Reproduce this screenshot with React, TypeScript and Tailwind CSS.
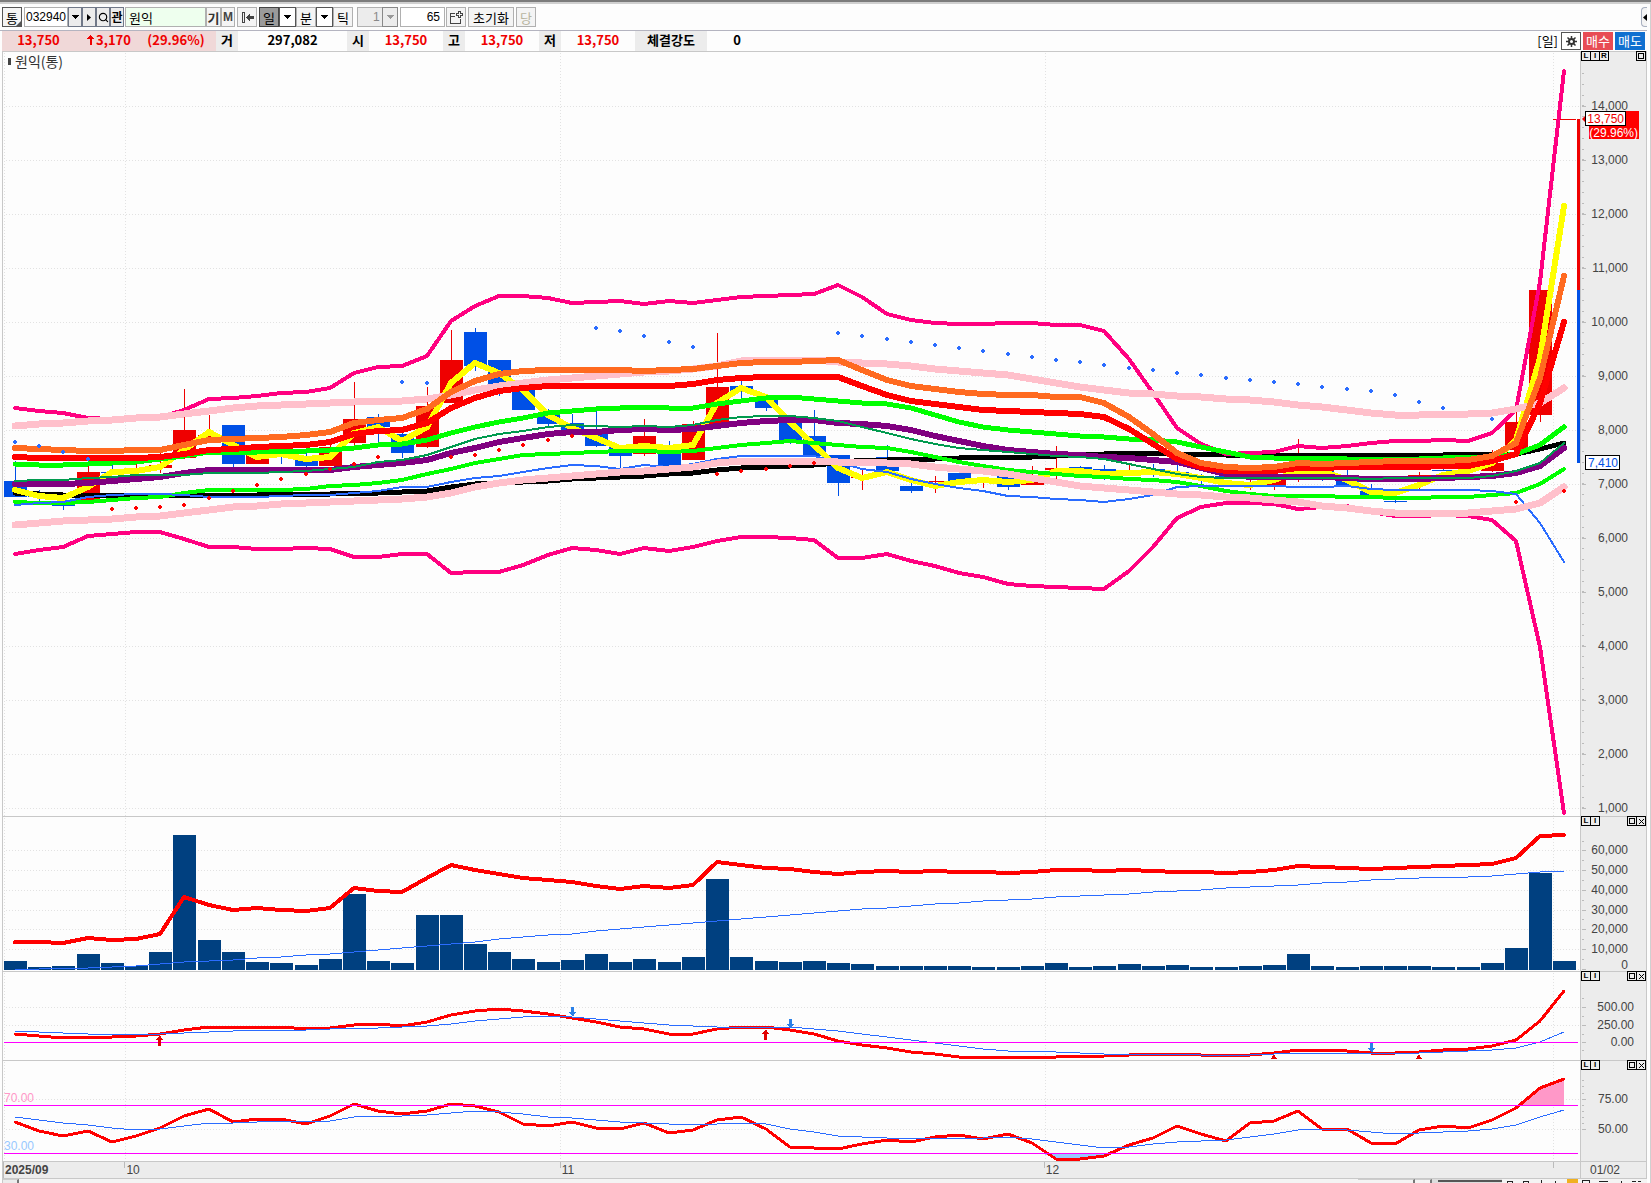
import type { ReactNode } from 'react'
import { Search } from 'lucide-react'

// plot coordinates: one slot per trading day, y grows downwards over all panels
const PLOT_X = 3
const PLOT_W = 1577
const AXIS_X = 1580
const AXIS_W = 67
const px = (i: number) => Math.round(15 + 24.21 * i)

const MONTHS = [4, 125, 560, 1045, 1553]

const UP = '#ef0000'
const DOWN = '#0050e6'

// wick top, body top, body bottom, wick bottom, direction
type Candle = [number, number, number, number, 'u' | 'd']

const candles: Candle[] = [
  [461, 481, 497, 497, 'd'], [490, 494, 497, 501, 'd'], [500, 502, 506, 510, 'd'], [457, 472, 503, 503, 'u'],
  [463, 472, 473, 475, 'd'], [462, 471, 472, 475, 'u'], [452, 465, 468, 473, 'u'], [389, 430, 458, 459, 'u'],
  [415, 435, 437, 437, 'u'], [425, 425, 464, 467, 'd'], [452, 455, 464, 464, 'u'], [448, 454, 456, 464, 'd'],
  [448, 458, 466, 467, 'd'], [443, 447, 466, 466, 'u'], [382, 419, 443, 445, 'u'], [414, 417, 427, 442, 'd'],
  [432, 434, 453, 458, 'd'], [387, 406, 447, 448, 'u'], [330, 360, 403, 403, 'u'], [328, 332, 366, 371, 'd'],
  [360, 360, 385, 396, 'd'], [387, 388, 410, 410, 'd'], [409, 415, 424, 427, 'd'], [414, 423, 433, 433, 'd'],
  [411, 432, 446, 447, 'd'], [445, 445, 456, 468, 'd'], [419, 436, 454, 456, 'u'], [441, 448, 466, 466, 'd'],
  [421, 424, 460, 460, 'u'], [333, 387, 425, 425, 'u'], [381, 386, 392, 399, 'd'], [394, 400, 408, 411, 'd'],
  [415, 423, 440, 444, 'd'], [410, 436, 456, 456, 'd'], [455, 455, 483, 496, 'd'], [468, 477, 478, 490, 'u'],
  [445, 457, 471, 471, 'd'], [483, 486, 491, 493, 'd'], [476, 481, 482, 493, 'u'], [472, 473, 481, 481, 'd'],
  [477, 480, 481, 488, 'u'], [475, 475, 487, 490, 'd'], [466, 482, 485, 485, 'u'], [446, 468, 470, 480, 'u'],
  [466, 467, 469, 469, 'd'], [465, 469, 472, 480, 'd'], [465, 471, 472, 472, 'u'], [464, 469, 470, 477, 'd'],
  [465, 472, 473, 473, 'd'], [474, 476, 477, 484, 'd'], [476, 476, 478, 478, 'd'], [478, 484, 486, 490, 'u'],
  [476, 478, 485, 490, 'u'], [439, 463, 474, 482, 'u'], [466, 468, 473, 481, 'd'], [470, 478, 485, 485, 'd'],
  [484, 491, 496, 496, 'd'], [500, 501, 502, 503, 'd'], [472, 475, 476, 489, 'u'], [468, 470, 471, 471, 'd'],
  [474, 475, 476, 477, 'd'], [450, 463, 471, 472, 'u'], [408, 422, 450, 456, 'u'], [290, 290, 415, 422, 'u'],
]

const bandTop = [408, 411, 413, 418, 419, 419, 417, 410, 399, 398, 396, 393, 392, 388, 373, 367, 366, 356, 321, 306, 296, 296, 298, 303, 302, 301, 304, 301, 303, 300, 297, 296, 295, 294, 285, 297, 314, 320, 323, 324, 324, 323, 323, 325, 325, 331, 359, 393, 428, 444, 454, 453, 452, 446, 448, 446, 443, 441, 441, 440, 441, 433, 410, 282, 71]
const bandBottom = [554, 550, 547, 536, 534, 532, 532, 539, 547, 547, 549, 549, 548, 549, 557, 557, 554, 554, 573, 572, 572, 565, 555, 548, 550, 554, 548, 551, 547, 541, 537, 537, 538, 540, 558, 558, 554, 561, 566, 573, 577, 584, 586, 587, 588, 589, 571, 547, 518, 507, 503, 503, 504, 509, 507, 506, 512, 516, 516, 515, 516, 520, 541, 647, 813]
const envTop = [426, 424, 423, 421, 420, 418, 417, 414, 411, 408, 406, 405, 404, 403, 402, 401, 401, 399, 395, 390, 386, 383, 380, 378, 376, 374, 372, 371, 369, 366, 361, 360, 360, 360, 362, 363, 364, 366, 369, 371, 373, 375, 379, 383, 387, 390, 393, 394, 396, 397, 399, 400, 402, 405, 407, 410, 413, 415, 415, 414, 414, 413, 409, 403, 388]
const envBottom = [525, 523, 521, 520, 519, 517, 516, 513, 510, 507, 506, 504, 503, 502, 501, 500, 499, 497, 493, 487, 483, 480, 478, 476, 474, 472, 471, 469, 467, 463, 461, 461, 461, 461, 462, 462, 463, 464, 467, 469, 471, 474, 478, 482, 486, 488, 490, 492, 494, 495, 497, 498, 500, 502, 506, 508, 511, 513, 513, 513, 513, 511, 509, 503, 487]
const orange = [448, 449, 450, 451, 451, 450, 450, 445, 440, 439, 438, 437, 435, 432, 423, 420, 418, 409, 392, 381, 374, 371, 370, 370, 370, 370, 371, 370, 369, 366, 363, 362, 362, 361, 360, 370, 380, 386, 389, 392, 394, 395, 395, 397, 397, 403, 417, 434, 453, 463, 467, 468, 467, 463, 464, 463, 462, 461, 461, 461, 460, 456, 443, 378, 276]
const red = [457, 458, 458, 458, 458, 458, 457, 454, 450, 449, 447, 446, 445, 442, 434, 431, 430, 423, 408, 398, 391, 388, 386, 386, 386, 386, 386, 386, 384, 380, 378, 377, 377, 377, 377, 386, 395, 401, 404, 407, 410, 411, 412, 413, 414, 417, 429, 444, 459, 467, 471, 471, 471, 468, 468, 467, 467, 467, 467, 466, 466, 461, 454, 403, 322]
const limeTop = [464, 465, 465, 464, 463, 462, 459, 456, 452, 452, 452, 451, 451, 450, 448, 445, 444, 440, 433, 427, 422, 418, 413, 411, 409, 408, 407, 408, 408, 404, 401, 398, 397, 399, 401, 403, 404, 408, 415, 422, 427, 430, 432, 434, 436, 437, 439, 440, 442, 447, 452, 457, 458, 458, 458, 459, 459, 459, 459, 458, 457, 457, 454, 445, 427]
const limeBottom = [502, 503, 503, 502, 500, 498, 497, 493, 490, 490, 490, 490, 489, 486, 485, 483, 480, 474, 469, 463, 459, 455, 454, 453, 452, 451, 451, 452, 451, 448, 445, 443, 441, 443, 445, 447, 448, 452, 457, 462, 466, 470, 472, 474, 476, 477, 479, 480, 482, 486, 491, 494, 496, 496, 496, 497, 497, 498, 498, 497, 497, 495, 493, 484, 469]
const purple = [484, 484, 484, 483, 481, 479, 477, 473, 470, 470, 470, 470, 470, 470, 467, 465, 463, 460, 453, 448, 442, 438, 434, 432, 432, 430, 429, 430, 429, 426, 423, 421, 420, 420, 423, 424, 426, 430, 436, 441, 446, 450, 452, 454, 455, 457, 458, 460, 462, 468, 474, 477, 477, 477, 477, 478, 479, 479, 479, 478, 477, 476, 473, 466, 448]
const teal = [481, 480, 480, 478, 477, 475, 475, 475, 473, 473, 473, 472, 471, 469, 467, 462, 460, 455, 447, 439, 434, 431, 427, 425, 426, 427, 426, 427, 425, 420, 417, 416, 416, 418, 421, 427, 433, 439, 444, 448, 450, 452, 454, 456, 457, 459, 464, 469, 474, 477, 478, 478, 478, 478, 478, 478, 479, 478, 478, 478, 478, 476, 471, 463, 443]
const black = [493, 494, 495, 495, 495, 495, 495, 495, 495, 495, 495, 494, 494, 494, 493, 493, 492, 491, 487, 484, 483, 482, 481, 479, 478, 477, 476, 474, 473, 470, 468, 467, 466, 465, 463, 460, 460, 459, 459, 458, 457, 457, 457, 456, 454, 454, 453, 453, 454, 454, 455, 455, 455, 455, 455, 455, 455, 455, 455, 455, 454, 454, 454, 449, 443]
const blue = [505, 503, 502, 497, 495, 494, 494, 495, 497, 497, 497, 496, 495, 495, 493, 491, 487, 487, 482, 478, 476, 472, 468, 465, 466, 469, 465, 467, 464, 459, 456, 456, 456, 456, 462, 469, 472, 479, 484, 488, 491, 496, 497, 499, 500, 502, 499, 495, 487, 486, 486, 486, 486, 487, 487, 486, 489, 490, 490, 490, 490, 491, 494, 523, 562]
const yellow = [490, 496, 498, 487, 472, 471, 467, 450, 432, 445, 457, 454, 459, 457, 433, 427, 441, 427, 383, 363, 373, 390, 415, 428, 438, 448, 446, 448, 445, 403, 388, 397, 422, 445, 468, 478, 472, 480, 486, 482, 480, 482, 480, 471, 471, 474, 473, 472, 474, 478, 483, 485, 480, 471, 471, 480, 492, 493, 485, 475, 471, 463, 440, 358, 206]

const sarDown: [number, number][] = [[0, 442], [1, 446], [2, 452], [3, 459], [16, 382], [17, 383], [24, 328], [25, 331], [26, 336], [27, 342], [28, 347], [34, 333], [35, 336], [36, 339], [37, 342], [38, 345], [39, 348], [40, 351], [41, 354], [42, 357], [43, 360], [44, 362], [45, 365], [46, 368], [47, 370], [48, 373], [49, 375], [50, 378], [51, 380], [52, 382], [53, 384], [54, 387], [55, 389], [56, 391], [57, 395], [58, 402], [59, 408], [61, 419]]
const sarUp: [number, number][] = [[4, 509], [5, 508], [6, 507], [7, 505], [8, 498], [9, 491], [10, 485], [11, 479], [12, 474], [13, 469], [14, 464], [15, 457], [18, 457], [19, 455], [20, 450], [21, 445], [22, 440], [23, 436], [29, 474], [30, 471], [31, 469], [32, 466], [33, 463], [62, 502], [64, 491]]

const volume = [961, 967, 966, 954, 963, 966, 952, 835, 940, 952, 962, 963, 965, 959, 894, 961, 963, 915, 915, 944, 952, 959, 962, 960, 954, 962, 959, 962, 957, 879, 957, 961, 962, 961, 963, 964, 966, 966, 966, 966, 967, 967, 966, 963, 967, 966, 964, 966, 965, 967, 967, 966, 965, 954, 966, 967, 966, 966, 966, 967, 967, 963, 948, 873, 961]
const volumeFast = [942, 942, 943, 938, 940, 939, 934, 897, 905, 910, 908, 910, 911, 908, 888, 891, 892, 878, 865, 870, 874, 878, 880, 882, 886, 889, 886, 888, 885, 862, 865, 868, 869, 872, 874, 872, 871, 872, 871, 872, 872, 873, 872, 870, 870, 871, 870, 871, 872, 872, 873, 872, 870, 866, 867, 868, 869, 868, 867, 866, 865, 864, 858, 836, 835]
const volumeSlow = [969, 969, 968, 968, 967, 966, 964, 962, 961, 960, 958, 957, 955, 954, 952, 950, 948, 946, 944, 942, 939, 937, 935, 934, 931, 929, 927, 925, 923, 921, 919, 917, 915, 913, 911, 909, 908, 906, 904, 903, 901, 900, 899, 897, 896, 895, 894, 892, 891, 890, 888, 887, 886, 885, 883, 882, 880, 879, 878, 877, 877, 876, 874, 872, 871]

const macd = [1034, 1036, 1038, 1037, 1037, 1036, 1034, 1030, 1027, 1028, 1027, 1027, 1029, 1028, 1025, 1024, 1026, 1022, 1015, 1011, 1009, 1011, 1014, 1018, 1022, 1027, 1029, 1034, 1034, 1029, 1027, 1027, 1030, 1034, 1041, 1045, 1048, 1052, 1054, 1057, 1057, 1058, 1057, 1057, 1056, 1056, 1055, 1054, 1054, 1055, 1055, 1055, 1053, 1050, 1050, 1051, 1053, 1053, 1052, 1050, 1049, 1046, 1040, 1021, 991]
const macdSignal = [1031, 1032, 1033, 1034, 1034, 1034, 1034, 1033, 1032, 1031, 1030, 1030, 1030, 1029, 1028, 1028, 1027, 1026, 1024, 1021, 1019, 1017, 1016, 1017, 1019, 1021, 1023, 1025, 1026, 1027, 1027, 1027, 1027, 1029, 1031, 1034, 1037, 1040, 1043, 1046, 1049, 1051, 1051, 1052, 1053, 1054, 1054, 1054, 1054, 1055, 1055, 1055, 1054, 1053, 1053, 1053, 1053, 1053, 1053, 1052, 1051, 1050, 1048, 1042, 1032]

const rsi = [1122, 1131, 1136, 1131, 1142, 1136, 1128, 1116, 1109, 1122, 1119, 1119, 1124, 1116, 1104, 1111, 1114, 1111, 1104, 1106, 1112, 1124, 1126, 1122, 1128, 1129, 1123, 1133, 1130, 1120, 1117, 1129, 1147, 1148, 1149, 1144, 1140, 1142, 1137, 1135, 1139, 1134, 1143, 1159, 1159, 1156, 1145, 1138, 1126, 1134, 1141, 1123, 1121, 1111, 1129, 1129, 1143, 1144, 1130, 1126, 1128, 1120, 1108, 1088, 1079]
const rsiSignal = [1117, 1120, 1123, 1125, 1128, 1130, 1129, 1126, 1123, 1123, 1122, 1121, 1122, 1121, 1117, 1116, 1116, 1115, 1113, 1111, 1112, 1114, 1117, 1118, 1120, 1122, 1123, 1124, 1125, 1124, 1123, 1124, 1129, 1132, 1136, 1137, 1138, 1139, 1138, 1138, 1138, 1137, 1139, 1142, 1145, 1148, 1147, 1144, 1142, 1141, 1140, 1137, 1134, 1130, 1129, 1130, 1132, 1134, 1133, 1132, 1131, 1129, 1125, 1117, 1110]

const points = (ys: number[]) => ys.map((y, i) => `${px(i)},${y}`).join(' ')

function Line({ ys, color, width = 1 }: { ys: number[]; color: string; width?: number }) {
  return (
    <polyline points={points(ys)} fill="none" stroke={color} strokeWidth={width} strokeLinejoin="round" strokeLinecap="round" />
  )
}

function Level({ y }: { y: number }) {
  return <rect x={4} y={y} width={1574} height={1} fill="#f0f" />
}

function Dot({ i, y, color }: { i: number; y: number; color: string }) {
  const x = px(i)
  return <path d={`M${x - 1} ${y - 2}h2v1h1v2h-1v1h-2v-1h-1v-2h1z`} fill={color} />
}

function Arrow({ i, y, dir }: { i: number; y: number; dir: 'up' | 'down' }) {
  const x = px(i)
  return dir === 'up' ? (
    <path d={`M${x} ${y}l3 5h-2v6h-3v-6h-2z`} fill="#e00000" />
  ) : (
    <path d={`M${x - 1} ${y}h3v5h2l-3 5l-4 -5h2z`} fill="#2a80e8" />
  )
}

function Plot({ top, height, grid, children }: { top: number; height: number; grid: number[]; children: ReactNode }) {
  return (
    <svg
      className="block w-full"
      height={height}
      viewBox={`${PLOT_X} ${top} ${PLOT_W} ${height}`}
      preserveAspectRatio="none"
      shapeRendering="crispEdges"
    >
      {grid.map(y => (
        <line key={y} x1={6} x2={1580} y1={y + 0.5} y2={y + 0.5} stroke="#e2e2e2" strokeDasharray="1 2" />
      ))}
      {MONTHS.map(x => (
        <line key={x} x1={x + 0.5} x2={x + 0.5} y1={top + 1} y2={top + height} stroke="#e2e2e2" strokeDasharray="1 2" />
      ))}
      {children}
    </svg>
  )
}

type Tick = { y: number; label: string; baseline?: number }

function Axis({ top, height, ticks, minor, right = 1627, children }: {
  top: number
  height: number
  ticks: Tick[]
  minor: number[]
  right?: number
  children?: ReactNode
}) {
  return (
    <svg
      className="block font-['Liberation_Sans',sans-serif] text-[12px]"
      width={AXIS_W}
      height={height}
      viewBox={`${AXIS_X} ${top} ${AXIS_W} ${height}`}
    >
      {ticks.map(t => (
        <g key={t.label}>
          <rect x={1581} y={t.y} width={4} height={1} fill="#bbb" />
          <text x={right} y={t.baseline ?? t.y + 4} textAnchor="end" fill="#444">{t.label}</text>
        </g>
      ))}
      {minor.map(y => <rect key={y} x={1581} y={y} width={2} height={1} fill="#bbb" />)}
      {children}
    </svg>
  )
}

function MiniButton({ label, children }: { label: string; children: ReactNode }) {
  return (
    <button aria-label={label} className="-ml-px flex h-[10px] w-[10px] items-center justify-center border border-black bg-[#ececec] font-['Liberation_Sans',sans-serif] text-[8px] leading-none font-bold">
      {children}
    </button>
  )
}

function PanelButtons({ main = false }: { main?: boolean }) {
  return (
    <div className="absolute inset-x-0 -top-px flex justify-between pl-px">
      <div className="flex">
        <MiniButton label="L">L</MiniButton>
        <MiniButton label="I">I</MiniButton>
        {main && <MiniButton label="R">R</MiniButton>}
      </div>
      <div className="flex">
        <MiniButton label="최대화"><span className="h-[6px] w-[6px] border border-black" /></MiniButton>
        {!main && (
          <MiniButton label="닫기">
            <svg width="7" height="7" viewBox="0 0 7 7" shapeRendering="crispEdges"><path d="M1 1l5 5M6 1l-5 5" stroke="#000" /></svg>
          </MiniButton>
        )}
      </div>
    </div>
  )
}

function Panel({ plot, axis, main }: { plot: ReactNode; axis: ReactNode; main?: boolean }) {
  return (
    <section className="flex border-b border-[#c8c8c8]">
      <div className="relative min-w-0 flex-1">{plot}</div>
      <div className="relative w-[67px] shrink-0 border-r border-l border-[#c8c8c8] bg-[#ececec]">
        {axis}
        <PanelButtons main={main} />
      </div>
    </section>
  )
}

function Caret({ color = '#000' }: { color?: string }) {
  return <svg width="7" height="4" viewBox="0 0 7 4" shapeRendering="crispEdges"><path d="M0 0h7L4 4H3z" fill={color} /></svg>
}

const BTN = 'flex h-5 items-center justify-center border border-[#b0b0b0] bg-[#f4f4f4]'
const BTN_3D = 'flex h-5 w-[14px] items-center justify-center border border-[#707888] bg-[#ececec]'
const BTN_DROP = 'flex h-5 w-[17px] items-center justify-center border border-[#555] bg-white'

function Toolbar() {
  return (
    <div className="flex h-[26px] items-start border-b border-[#b4b4c0] pt-[2px] pl-[2px] text-[13px] leading-none">
      <button className="relative mr-[2px] flex h-5 w-5 items-center justify-center border border-[#555] bg-[#f4f4f4]">
        통
        <svg className="absolute right-0 bottom-0" width="5" height="5" viewBox="0 0 5 5"><path d="M5 0v5H0z" fill="#555" /></svg>
      </button>
      <input aria-label="종목코드" defaultValue="032940" className="h-5 w-11 border border-[#b0b0b0] bg-white pl-px font-['Liberation_Sans',sans-serif] text-[12px]" />
      <button aria-label="종목 목록" className={BTN_3D}><Caret /></button>
      <button aria-label="다음 종목" className={BTN_3D}>
        <svg width="4" height="7" viewBox="0 0 4 7"><path d="M0 0l4 3.500L0 7z" /></svg>
      </button>
      <button aria-label="종목 검색" className={BTN_3D}><Search size={11} strokeWidth={2.500} /></button>
      <button className={`${BTN_3D} text-[12px] font-bold`}>관</button>
      <input aria-label="종목명" defaultValue="원익" className="ml-px h-5 w-[81px] border border-[#b0b0b0] bg-[#eeffee] pl-[3px]" />
      <button className={`${BTN} w-[15px] font-bold text-[#333]`}>기</button>
      <button className={`${BTN} mr-[2px] w-[14px] font-['Liberation_Sans',sans-serif] text-[12px] font-bold text-[#444]`}>M</button>
      <button aria-label="처음으로" className={`${BTN} mr-[2px] w-5`}>
        <svg width="13" height="11" viewBox="0 0 13 11" shapeRendering="crispEdges"><path d="M1.500.5h2v10h-2z" fill="none" stroke="#444" /><path d="M5 5.500L9 1v3h4v3H9v3z" fill="#444" /></svg>
      </button>
      <button className="flex h-5 w-5 items-center justify-center border border-[#444] bg-[#9a9a9a]">일</button>
      <button aria-label="일 주기" className={BTN_DROP}><Caret /></button>
      <button className={`${BTN} w-5`}>분</button>
      <button aria-label="분 주기" className={BTN_DROP}><Caret /></button>
      <button className={`${BTN} mr-1 w-5`}>틱</button>
      <div className="relative mr-[2px] flex h-5 w-[41px]">
        <select aria-label="주기" disabled className="h-5 w-full appearance-none border border-[#b0b0b0] bg-[#ececec] pl-[15px] font-['Liberation_Sans',sans-serif] text-[12px] text-[#888]">
          <option>1</option>
        </select>
        <span className="pointer-events-none absolute inset-y-0 right-0 flex w-4 items-center justify-center border border-[#888] bg-[#ececec]"><Caret color="#999" /></span>
      </div>
      <input aria-label="봉 개수" defaultValue="65" className="mr-px h-5 w-[45px] border border-[#b0b0b0] bg-white pr-1 text-right font-['Liberation_Sans',sans-serif] text-[12px]" />
      <button aria-label="차트 추가" className={`${BTN} mr-[2px] w-5`}>
        <svg width="14" height="15" viewBox="0 0 14 15" shapeRendering="crispEdges" fill="none" stroke="#444">
          <path d="M6 3.500H1.500v10h10V9M1.500 6.500H6" />
          <path d="M9.500 1.500h2v2h2v2h-2v2h-2v-2h-2v-2h2z" />
        </svg>
      </button>
      <button className={`${BTN} mr-[2px] w-[46px]`}>초기화</button>
      <button disabled className={`${BTN} w-5 text-[#b8b4a0]`}>당</button>
      <button aria-label="패널 열기" className="ml-auto flex h-5 w-[6px] items-center justify-end rounded-l border border-r-0 border-[#a8b0c0] bg-[#f4f4f4]">
        <svg width="4" height="7" viewBox="0 0 4 7"><path d="M4 0v7L0 3.500z" /></svg>
      </button>
    </div>
  )
}

const quotes = [
  { label: '거', value: '297,082', tone: 'text-black', width: 'w-[109px]', labelWidth: 'w-[22px]' },
  { label: '시', value: '13,750', tone: 'text-[#ef0000]', width: 'w-[74px]', labelWidth: 'w-[22px]' },
  { label: '고', value: '13,750', tone: 'text-[#ef0000]', width: 'w-[74px]', labelWidth: 'w-[22px]' },
  { label: '저', value: '13,750', tone: 'text-[#ef0000]', width: 'w-[74px]', labelWidth: 'w-[22px]' },
  { label: '체결강도', value: '0', tone: 'text-black', width: 'w-[60px]', labelWidth: 'w-[72px]' },
]

function QuoteBar() {
  return (
    <div className="ml-[2px] flex h-[21px] items-stretch border-b border-[#c8c8c8] text-[13px] leading-[18px] font-bold">
      <div className="flex w-[214px] bg-[#f0d8d8] text-[#ef0000]">
        <span className="w-[73px] text-center">13,750</span>
        <span className="flex h-[18px] w-[68px] items-center justify-center gap-[2px]">
          <svg width="7" height="10" viewBox="0 0 7 10" shapeRendering="crispEdges"><path d="M3.500 0L7 4H5v6H3V4H0z" fill="#ef0000" /></svg>
          3,170
        </span>
        <span className="w-[66px] text-center">(29.96%)</span>
      </div>
      {quotes.map(q => (
        <div key={q.label} className="flex">
          <span className={`${q.labelWidth} bg-[#ececec] text-center`}>{q.label}</span>
          <span className={`${q.width} ${q.tone} text-center`}>{q.value}</span>
        </div>
      ))}
      <div className="mr-[2px] ml-auto flex items-center gap-[2px] font-normal">
        <span className="mr-px">[일]</span>
        <button aria-label="설정" className="flex h-[18px] w-5 items-center justify-center border border-[#555] bg-white">
          <svg width="11" height="11" viewBox="0 0 11 11">
            <path d="M5.500 0v11M0 5.500h11M1.500 1.500l8 8M9.500 1.500l-8 8" stroke="#333" strokeWidth="1.500" />
            <circle cx="5.500" cy="5.500" r="3.500" fill="#333" />
            <circle cx="5.500" cy="5.500" r="1.500" fill="#fff" />
          </svg>
        </button>
        <button className="h-[18px] w-[30px] bg-[#e84c54] leading-[18px] text-white">매수</button>
        <button className="h-[18px] w-[30px] bg-[#1070d0] leading-[18px] text-white">매도</button>
      </div>
    </div>
  )
}

const priceTicks: Tick[] = Array.from({ length: 14 }, (_, k) => ({
  y: 106 + 54 * k,
  label: `${14 - k},000`,
}))
const priceMinor = Array.from({ length: 69 }, (_, k) => Math.round(73 + 10.8 * k)).filter(y => (y - 106) % 54 !== 0)

function PricePanel() {
  return (
    <Panel
      main
      plot={
        <>
          <Plot top={52} height={764} grid={priceTicks.map(t => t.y)}>
            {candles.map(([hi, top, bottom, lo, dir], i) => (
              <g key={i} fill={dir === 'u' ? UP : DOWN}>
                <rect x={px(i)} y={hi} width={1} height={lo - hi} />
                <rect x={px(i) - 11} y={top} width={23} height={bottom - top} />
              </g>
            ))}
            <rect x={1553} y={119} width={23} height={1} fill={UP} />
            <Line ys={black} color="#000" width={5} />
            <Line ys={yellow} color="#ffff00" width={6} />
            <Line ys={bandTop} color="#ff0080" width={4} />
            <Line ys={bandBottom} color="#ff0080" width={4} />
            <Line ys={limeTop} color="#00ff00" width={5} />
            <Line ys={limeBottom} color="#00ff00" width={4} />
            <Line ys={blue} color="#2a6cff" width={2} />
            <Line ys={envTop} color="#ffc0cb" width={7} />
            <Line ys={envBottom} color="#ffc0cb" width={7} />
            <Line ys={purple} color="#800080" width={6} />
            <Line ys={teal} color="#009a4e" width={2} />
            <Line ys={red} color="#ff0000" width={6} />
            <Line ys={orange} color="#ff6a20" width={6} />
            {sarDown.map(([i, y]) => <Dot key={i} i={i} y={y} color="#2a6cff" />)}
            {sarUp.map(([i, y]) => <Dot key={i} i={i} y={y} color="#ff0000" />)}
            <rect x={1577} y={119} width={3} height={171} fill={UP} />
            <rect x={1577} y={290} width={3} height={173} fill={DOWN} />
          </Plot>
          <h1 className="absolute top-0 left-[5px] flex items-center gap-1 text-[14px] leading-[18px] text-[#333]">
            <span className="h-[7px] w-[3px] bg-[#444]" />
            원익(통)
          </h1>
        </>
      }
      axis={
        <Axis top={52} height={764} ticks={priceTicks} minor={priceMinor}>
          <path d="M1581 119l4 -4v8z" fill={UP} />
          <rect x={1588} y={111} width={50} height={28} fill="#ff0000" />
          <rect x={1584.500} y={111.500} width={40} height={14} fill="#fff" stroke="#000" />
          <text x={1623} y={123} textAnchor="end" fill="#ef0000">13,750</text>
          <text x={1637} y={137} textAnchor="end" fill="#fff">(29.96%)</text>
          <rect x={1584.500} y={455.500} width={34} height={14} fill="#fff" stroke="#000" />
          <text x={1617} y={467} textAnchor="end" fill={DOWN}>7,410</text>
        </Axis>
      }
    />
  )
}

const volumeTicks: Tick[] = [
  { y: 850, label: '60,000' },
  { y: 870, label: '50,000' },
  { y: 890, label: '40,000' },
  { y: 910, label: '30,000' },
  { y: 929, label: '20,000' },
  { y: 949, label: '10,000' },
  { y: 969, label: '0', baseline: 969 },
]

function VolumePanel() {
  return (
    <Panel
      plot={
        <Plot top={817} height={154} grid={volumeTicks.map(t => t.y)}>
          {volume.map((y, i) => <rect key={i} x={px(i) - 11} y={y} width={23} height={970 - y} fill="#004080" />)}
          <Line ys={volumeFast} color="#ff0000" width={4} />
          <Line ys={volumeSlow} color="#2a6cff" />
        </Plot>
      }
      axis={<Axis top={817} height={154} ticks={volumeTicks} minor={[841, 860, 880, 900, 919, 939, 959]} />}
    />
  )
}

function MacdPanel() {
  return (
    <Panel
      plot={
        <Plot top={972} height={88} grid={[1007, 1025]}>
          <Line ys={macd} color="#ff0000" width={3} />
          <Line ys={macdSignal} color="#2a6cff" />
          <Level y={1042} />
          <Arrow i={6} y={1035} dir="up" />
          <Arrow i={31} y={1029} dir="up" />
          <Arrow i={23} y={1007} dir="down" />
          <Arrow i={32} y={1019} dir="down" />
          <Arrow i={56} y={1043} dir="down" />
          <path d={`M${px(52)} 1054l3 5h-6zM${px(58)} 1054l3 5h-6z`} fill="#e00000" />
        </Plot>
      }
      axis={
        <Axis
          top={972}
          height={88}
          right={1633}
          ticks={[{ y: 1007, label: '500.00' }, { y: 1025, label: '250.00' }, { y: 1042, label: '0.00' }]}
          minor={[998, 1016, 1034, 1050]}
        />
      }
    />
  )
}

function RsiPanel() {
  return (
    <Panel
      plot={
        <>
          <Plot top={1061} height={100} grid={[1099, 1129]}>
            <path d={`M${px(62) + 3} 1105L${px(63)} 1088L${px(64)} 1079V1105z`} fill="#ff98c8" />
            <path d={`M${px(42) + 12} 1154L${px(43)} 1159H${px(44)}L${px(45) + 6} 1154z`} fill="#98c8ff" />
            <Line ys={rsi} color="#ff0000" width={3} />
            <Line ys={rsiSignal} color="#2a6cff" />
            <Level y={1105} />
            <Level y={1153} />
          </Plot>
          <span className="absolute top-[29px] left-px font-['Liberation_Sans',sans-serif] text-[12px] leading-4 text-[#ff98c8]">70.00</span>
          <span className="absolute top-[77px] left-px font-['Liberation_Sans',sans-serif] text-[12px] leading-4 text-[#98c8ff]">30.00</span>
        </>
      }
      axis={
        <Axis
          top={1061}
          height={100}
          ticks={[{ y: 1099, label: '75.00' }, { y: 1129, label: '50.00' }]}
          minor={[1080, 1086, 1093, 1105, 1111, 1117, 1123]}
        />
      }
    />
  )
}

function TimeAxis() {
  return (
    <div className="flex h-[17px] border-b border-[#c8c8c8] bg-[#ececec] font-['Liberation_Sans',sans-serif] text-[12px] leading-4 text-[#444]">
      <div className="flex min-w-0 flex-1">
        <span className="w-[7.700%] border-l border-[#bbb] pl-px font-bold">2025/09</span>
        <span className="flex w-[27.600%] gap-px"><i className="h-[6px] w-px bg-[#bbb]" />10</span>
        <span className="flex w-[30.700%] gap-px"><i className="h-[6px] w-px bg-[#bbb]" />11</span>
        <span className="flex w-[32.300%] gap-px"><i className="h-[6px] w-px bg-[#bbb]" />12</span>
        <i className="h-[6px] w-px bg-[#bbb]" />
      </div>
      <div className="w-[67px] border-x border-[#c8c8c8] pl-[9px]">01/02</div>
    </div>
  )
}

// top edge of the scroll and zoom tools below the chart
function BottomStrip() {
  return (
    <div className="flex h-1 overflow-hidden bg-[#f4f4f4]">
      <span className="w-4 border-t border-r-2 border-[#777] border-t-[#ccc] bg-[#ececec]" />
      <span className="ml-auto w-[57px] border-t border-r-2 border-[#777] border-t-[#ccc]" />
      <span className="w-[17px] border-t border-r-2 border-[#777] border-t-[#ccc]" />
      <span className="w-[70px] bg-[#ddd] pt-px pl-[6px]"><span className="block h-[2px] bg-[#555]" /></span>
      <svg width="145" height="4" viewBox="0 0 145 4" shapeRendering="crispEdges">
        <path d="M5 4V2h5v2M21 4V2h5v2M39 4V1M53 4V2M80 4V1h7v3M97 2h9M119 4V2M130 2h4M136 2h3" stroke="#222" fill="none" />
        <path d="M65 0h11v4H65z" fill="#f0b020" />
      </svg>
    </div>
  )
}

export default function App() {
  return (
    <main className="min-h-screen border-t-2 border-[#7c7c7c] bg-[#fdfdfd] font-['Noto_Sans_CJK_KR',sans-serif] text-black">
      <div className="border-t-2 border-r border-[#d0d0d0]">
        <div className="pt-px pr-[3px]">
          <Toolbar />
          <QuoteBar />
          <div className="ml-[2px] border-l border-[#c8c8c8]">
            <PricePanel />
            <VolumePanel />
            <MacdPanel />
            <RsiPanel />
            <TimeAxis />
            <BottomStrip />
          </div>
        </div>
      </div>
    </main>
  )
}
